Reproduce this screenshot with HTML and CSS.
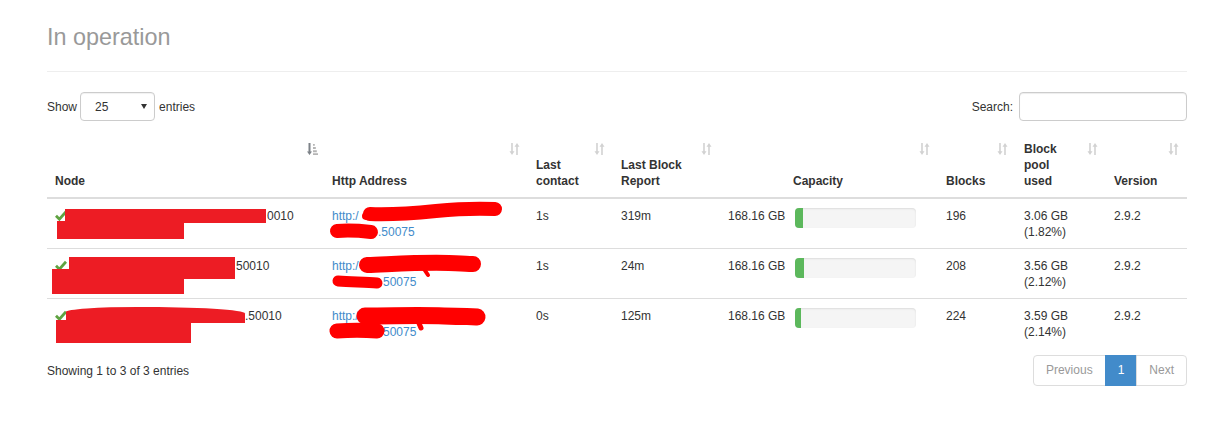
FILE: index.html
```
<!DOCTYPE html>
<html>
<head>
<meta charset="utf-8">
<title>In operation</title>
<link rel="stylesheet" href="styles.css">
</head>
<body>
<div class="page">
  <div class="page-header"><h1>In operation</h1></div>

  <div class="controls">
    <div class="length">
      <span>Show</span>
      <div class="select"><span>25</span><svg class="caret" width="6" height="5" viewBox="0 0 6 5"><path d="M0 0h6L3 5z" fill="#333"/></svg></div>
      <span>entries</span>
    </div>
    <div class="filter">
      <span>Search:</span>
      <input type="text" class="search">
    </div>
  </div>

  <table class="dt">
    <colgroup>
      <col class="c-node"><col class="c-http"><col class="c-contact"><col class="c-report"><col class="c-cap"><col class="c-blocks"><col class="c-pool"><col class="c-ver">
    </colgroup>
    <thead>
      <tr>
        <th>Node<svg class="si si-active" width="11" height="12" viewBox="0 0 11 12"><path d="M1.5 0h2v8.5h1.5l-2.5 3.5-2.5-3.5h1.5z" fill="#7d8288"/><path d="M6 1h1.8v1.8H6zM6 4h2.8v2H6zM6 7.2h3.8v2H6zM6 10.3h5V12H6z" fill="#b5b5b5"/></svg></th>
        <th>Http Address<svg class="si" width="11" height="12" viewBox="0 0 11 12"><path d="M2.2 0h1.6v8.3h1.7L3 12 .5 8.3h1.7zM7.2 12h1.6V3.7h1.7L8 0 5.5 3.7h1.7z" fill="currentColor"/></svg></th>
        <th>Last contact<svg class="si" width="11" height="12" viewBox="0 0 11 12"><path d="M2.2 0h1.6v8.3h1.7L3 12 .5 8.3h1.7zM7.2 12h1.6V3.7h1.7L8 0 5.5 3.7h1.7z" fill="currentColor"/></svg></th>
        <th>Last Block Report<svg class="si" width="11" height="12" viewBox="0 0 11 12"><path d="M2.2 0h1.6v8.3h1.7L3 12 .5 8.3h1.7zM7.2 12h1.6V3.7h1.7L8 0 5.5 3.7h1.7z" fill="currentColor"/></svg></th>
        <th class="th-cap">Capacity<svg class="si" width="11" height="12" viewBox="0 0 11 12"><path d="M2.2 0h1.6v8.3h1.7L3 12 .5 8.3h1.7zM7.2 12h1.6V3.7h1.7L8 0 5.5 3.7h1.7z" fill="currentColor"/></svg></th>
        <th>Blocks<svg class="si" width="11" height="12" viewBox="0 0 11 12"><path d="M2.2 0h1.6v8.3h1.7L3 12 .5 8.3h1.7zM7.2 12h1.6V3.7h1.7L8 0 5.5 3.7h1.7z" fill="currentColor"/></svg></th>
        <th>Block pool used<svg class="si" width="11" height="12" viewBox="0 0 11 12"><path d="M2.2 0h1.6v8.3h1.7L3 12 .5 8.3h1.7zM7.2 12h1.6V3.7h1.7L8 0 5.5 3.7h1.7z" fill="currentColor"/></svg></th>
        <th>Version<svg class="si" width="11" height="12" viewBox="0 0 11 12"><path d="M2.2 0h1.6v8.3h1.7L3 12 .5 8.3h1.7zM7.2 12h1.6V3.7h1.7L8 0 5.5 3.7h1.7z" fill="currentColor"/></svg></th>
      </tr>
    </thead>
    <tbody>
      <tr>
        <td class="node"><svg class="ok" width="12" height="11" viewBox="0 0 12 11"><path d="M1 5.8l3.4 3.4L11 1.8" fill="none" stroke="#5fa341" stroke-width="2.8"/></svg><span class="gap g1"></span>0010<br>&nbsp;<i class="rd n1a"></i><i class="rd n1b"></i></td>
        <td class="http"><a>http:/</a><div class="l2 i1"><a>.50075</a></div><svg class="scrib" width="204" height="50" viewBox="0 0 204 50"><path d="M46 15C70 16 92 14 112 12S150 9 171 10" stroke="#f00" stroke-width="14" stroke-linecap="round" fill="none"/><path d="M42 17L60 18" stroke="#f00" stroke-width="8" stroke-linecap="round"/><path d="M13 32C25 31 38 32 47 33" stroke="#f00" stroke-width="14" stroke-linecap="round" fill="none"/></svg></td>
        <td>1s</td>
        <td>319m</td>
        <td><div class="cap"><span>168.16 GB</span><div class="progress"><div class="bar" style="width:6%"></div></div></div></td>
        <td>196</td>
        <td>3.06 GB (1.82%)</td>
        <td>2.9.2</td>
      </tr>
      <tr>
        <td class="node"><svg class="ok" width="12" height="11" viewBox="0 0 12 11"><path d="M1 5.8l3.4 3.4L11 1.8" fill="none" stroke="#5fa341" stroke-width="2.8"/></svg><span class="gap g2"></span>50010<br>&nbsp;<i class="rd n2a"></i><i class="rd n2b"></i></td>
        <td class="http"><a>http:/</a><div class="l2 i2"><a>50075</a></div><svg class="scrib" width="204" height="50" viewBox="0 0 204 50"><path d="M43 16C70 15 100 13 125 14S145 15 149 15" stroke="#f00" stroke-width="16" stroke-linecap="round" fill="none"/><path d="M100 20L104 26" stroke="#f00" stroke-width="4" stroke-linecap="round"/><path d="M14 32C28 33 42 33 53 34" stroke="#f00" stroke-width="11" stroke-linecap="round" fill="none"/></svg></td>
        <td>1s</td>
        <td>24m</td>
        <td><div class="cap"><span>168.16 GB</span><div class="progress"><div class="bar" style="width:7%"></div></div></div></td>
        <td>208</td>
        <td>3.56 GB (2.12%)</td>
        <td>2.9.2</td>
      </tr>
      <tr>
        <td class="node"><svg class="ok" width="12" height="11" viewBox="0 0 12 11"><path d="M1 5.8l3.4 3.4L11 1.8" fill="none" stroke="#5fa341" stroke-width="2.8"/></svg><span class="gap g3"></span>.50010<br>&nbsp;<i class="rd n3a"></i><i class="rd n3b"></i></td>
        <td class="http"><a>http:/</a><div class="l2 i3"><a>50075</a></div><svg class="scrib" width="204" height="50" viewBox="0 0 204 50"><path d="M41 17C70 17 95 16 120 17S145 17 153 18" stroke="#f00" stroke-width="17" stroke-linecap="round" fill="none"/><path d="M94 22L97 29" stroke="#f00" stroke-width="5" stroke-linecap="round"/><path d="M13 32C26 31 40 31 53 32" stroke="#f00" stroke-width="15" stroke-linecap="round" fill="none"/></svg></td>
        <td>0s</td>
        <td>125m</td>
        <td><div class="cap"><span>168.16 GB</span><div class="progress"><div class="bar" style="width:5%"></div></div></div></td>
        <td>224</td>
        <td>3.59 GB (2.14%)</td>
        <td>2.9.2</td>
      </tr>
    </tbody>
  </table>

  <div class="footer">
    <div class="info">Showing 1 to 3 of 3 entries</div>
    <ul class="pagination">
      <li class="disabled"><a>Previous</a></li>
      <li class="active"><a>1</a></li>
      <li class="disabled"><a>Next</a></li>
    </ul>
  </div>
</div>
</body>
</html>
```
FILE: styles.css
```
* { box-sizing: border-box; }

body {
  margin: 0;
  background: #fff;
  color: #333;
  font-family: "Liberation Sans", Arial, sans-serif;
  font-size: 12px;
  line-height: 16px;
}

.page {
  width: 1140px;
  margin-left: 47px;
}

.page-header {
  height: 72px;
  padding-top: 24px;
  border-bottom: 1px solid #eee;
}

.page-header h1 {
  margin: 0;
  font-size: 23.4px;
  line-height: 26px;
  font-weight: normal;
  color: #999;
}

.controls {
  margin-top: 20px;
  height: 29px;
  display: flex;
  justify-content: space-between;
  align-items: center;
}

.length, .filter {
  display: flex;
  align-items: center;
}

.select {
  width: 75px;
  height: 29px;
  margin: 0 4px 0 3px;
  border: 1px solid #ccc;
  border-radius: 4px;
  padding: 0 7px 0 14px;
  display: flex;
  align-items: center;
  justify-content: space-between;
  box-shadow: inset 0 1px 1px rgba(0,0,0,.06);
}

.search {
  width: 168px;
  height: 29px;
  margin: 0 0 0 6px;
  border: 1px solid #ccc;
  border-radius: 4px;
  box-shadow: inset 0 1px 1px rgba(0,0,0,.075);
  font: inherit;
  outline: none;
}

.dt {
  margin-top: 12px;
  width: 1140px;
  table-layout: fixed;
  border-collapse: collapse;
}

.c-node { width: 277px; }
.c-http { width: 204px; }
.c-contact { width: 85px; }
.c-report { width: 107px; }
.c-cap { width: 218px; }
.c-blocks { width: 78px; }
.c-pool { width: 90px; }
.c-ver { width: 81px; }

.dt th {
  position: relative;
  padding: 8px 30px 8px 8px;
  text-align: left;
  vertical-align: bottom;
  font-weight: bold;
  border-bottom: 2px solid #ddd;
}

.dt th.th-cap { text-align: center; }

.si {
  position: absolute;
  top: 10px;
  right: 8px;
  color: #d2d2d2;
}

.si-active { right: 6px; }

.dt td {
  position: relative;
  padding: 8.5px 8px 7.5px;
  line-height: 16.5px;
  vertical-align: top;
  border-top: 1px solid #ddd;
}

.ok {
  display: inline-block;
  vertical-align: -1px;
}

.gap { display: inline-block; }
.g1 { width: 200px; }
.g2 { width: 169px; }
.g3 { width: 178px; }

.rd {
  position: absolute;
  background: #ed1c24;
}

.n1a { left: 18px; top: 10px; width: 201px; height: 14px; }
.n1b { left: 10px; top: 22px; width: 127px; height: 18px; }
.n2a { left: 22px; top: 8px; width: 166px; height: 22px; }
.n2b { left: 5px; top: 20px; width: 132px; height: 25px; }
.n3a { left: 19px; top: 8px; width: 179px; height: 16px; border-radius: 40% 60% 10% 20% / 30% 40% 0 0; }
.n3b { left: 9px; top: 21px; width: 135px; height: 23px; }

a {
  color: #428bca;
  text-decoration: none;
}

.l2.i1 { padding-left: 46px; }
.l2.i2 { padding-left: 51px; }
.l2.i3 { padding-left: 51px; }

.scrib {
  position: absolute;
  left: 0;
  top: 0;
}

.cap {
  display: flex;
  align-items: flex-start;
  gap: 10px;
}

.progress {
  width: 121px;
  height: 20px;
  margin-top: 0;
  background: #f5f5f5;
  border-radius: 4px;
  overflow: hidden;
  box-shadow: inset 0 1px 2px rgba(0,0,0,.1);
}

.bar {
  height: 100%;
  background: #5cb85c;
}

.footer {
  margin-top: 7px;
  display: flex;
  justify-content: space-between;
  align-items: center;
}

.pagination {
  margin: 0;
  padding: 0;
  list-style: none;
  display: flex;
}

.pagination li a {
  display: block;
  padding: 6px 12px;
  line-height: 17px;
  border: 1px solid #ddd;
  margin-left: -1px;
  color: #428bca;
  background: #fff;
}

.pagination li:first-child a {
  margin-left: 0;
  border-radius: 4px 0 0 4px;
}

.pagination li:last-child a {
  border-radius: 0 4px 4px 0;
}

.pagination li.disabled a { color: #999; }

.pagination li.active a {
  background: #428bca;
  border-color: #428bca;
  color: #fff;
}
```
